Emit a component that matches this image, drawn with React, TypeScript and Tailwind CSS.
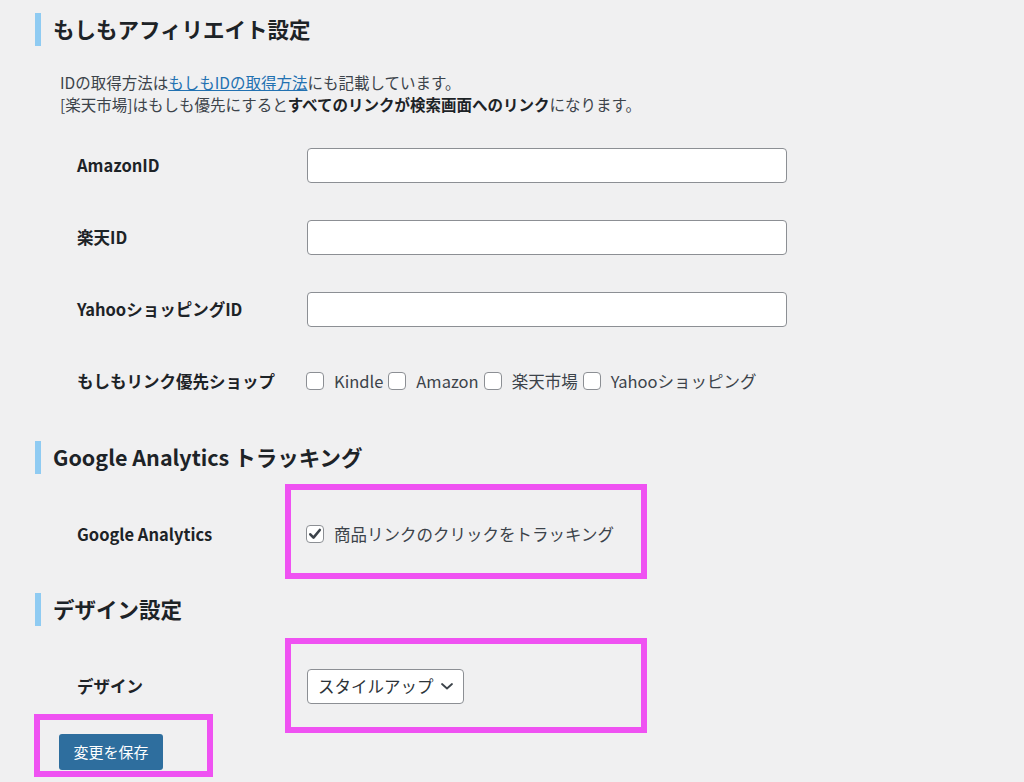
import React from "react";

const font = { fontFamily: '"Noto Sans CJK JP", "Noto Sans", sans-serif' };

function SectionTitle({ children, className = "" }: { children: React.ReactNode; className?: string }) {
  return (
    <h2
      className={`flex h-[33px] items-center border-l-[6px] border-[#8fcbf2] pl-[12px] text-[21.5px] font-bold text-[#1d2327] ${className}`}
    >
      {children}
    </h2>
  );
}

function Row({ label, children }: { label: string; children: React.ReactNode }) {
  return (
    <div className="ml-[42px] flex h-[72px] items-center">
      <div className="w-[230px] shrink-0 text-[16.5px] font-bold text-[#1d2327]">{label}</div>
      <div className="flex items-center">{children}</div>
    </div>
  );
}

function TextInput() {
  return (
    <input
      type="text"
      className="h-[35px] w-[480px] rounded-[4px] border border-[#8c8f94] bg-white px-2 outline-none"
    />
  );
}

function Box({ checked = false }: { checked?: boolean }) {
  return (
    <span className="flex h-[18px] w-[18px] shrink-0 items-center justify-center rounded-[4px] border border-[#8c8f94] bg-white">
      {checked && (
        <svg width="14" height="14" viewBox="0 0 14 14">
          <path d="M2.3 7.3 L5.5 10.6 L11.8 3" fill="none" stroke="#3c434a" strokeWidth="2.6" strokeLinecap="round" strokeLinejoin="round" />
        </svg>
      )}
    </span>
  );
}

function Check({ label, checked = false }: { label: string; checked?: boolean }) {
  return (
    <label className="mr-[5px] flex items-center gap-[10px] text-[16.5px] text-[#3c434a]">
      <Box checked={checked} />
      <span>{label}</span>
    </label>
  );
}

export default function App() {
  return (
    <div className="relative min-h-[782px] w-full bg-[#f0f0f1] pl-[35px] pt-[13px]" style={font}>
      <SectionTitle>もしもアフィリエイト設定</SectionTitle>

      <div className="ml-[25px] mt-[25px] text-[15.5px] leading-[22px] text-[#3c434a]">
        <p>
          IDの取得方法は
          <a href="#" className="text-[#2271b1] underline">
            もしもIDの取得方法
          </a>
          にも記載しています。
        </p>
        <p>
          [楽天市場]はもしも優先にすると<strong className="font-bold text-[#1d2327]">すべてのリンクが検索画面へのリンク</strong>になります。
        </p>
      </div>

      <div className="mt-[14px]">
        <Row label="AmazonID">
          <TextInput />
        </Row>
        <Row label="楽天ID">
          <TextInput />
        </Row>
        <Row label="YahooショッピングID">
          <TextInput />
        </Row>
        <Row label="もしもリンク優先ショップ">
          <div className="-ml-[1px] flex items-center">
            <Check label="Kindle" />
            <Check label="Amazon" />
            <Check label="楽天市場" />
            <Check label="Yahooショッピング" />
          </div>
        </Row>
      </div>

      <SectionTitle className="mt-[24px]">Google Analytics トラッキング</SectionTitle>
      <div className="mt-[24px]">
        <Row label="Google Analytics">
          <div className="-ml-[1px]">
            <Check label="商品リンクのクリックをトラッキング" checked />
          </div>
        </Row>
      </div>

      <SectionTitle className="mt-[23px]">デザイン設定</SectionTitle>
      <div className="mt-[24px]">
        <Row label="デザイン">
          <div className="flex h-[35px] w-[157px] items-center justify-between rounded-[4px] border border-[#8c8f94] bg-white pl-[10px] pr-[8px] text-[16.5px] text-[#2c3338]">
            <span>スタイルアップ</span>
            <svg width="16" height="16" viewBox="0 0 16 16">
              <path d="M3 6 L8 10.5 L13 6" fill="none" stroke="#3c434a" strokeWidth="1.8" strokeLinecap="round" strokeLinejoin="round" />
            </svg>
          </div>
        </Row>
      </div>

      <button className="ml-[24px] mt-[12px] flex h-[36px] w-[104px] items-center justify-center rounded-[3px] bg-[#2e6e9e] text-[15px] text-white">
        変更を保存
      </button>

      {/* annotation frames */}
      <div className="pointer-events-none absolute left-[285px] top-[484px] h-[95px] w-[362px] border-[6px] border-[#ef52f2]" />
      <div className="pointer-events-none absolute left-[285px] top-[638px] h-[95px] w-[362px] border-[6px] border-[#ef52f2]" />
      <div className="pointer-events-none absolute left-[34px] top-[714px] h-[63px] w-[179px] border-[6px] border-[#ef52f2]" />
    </div>
  );
}
